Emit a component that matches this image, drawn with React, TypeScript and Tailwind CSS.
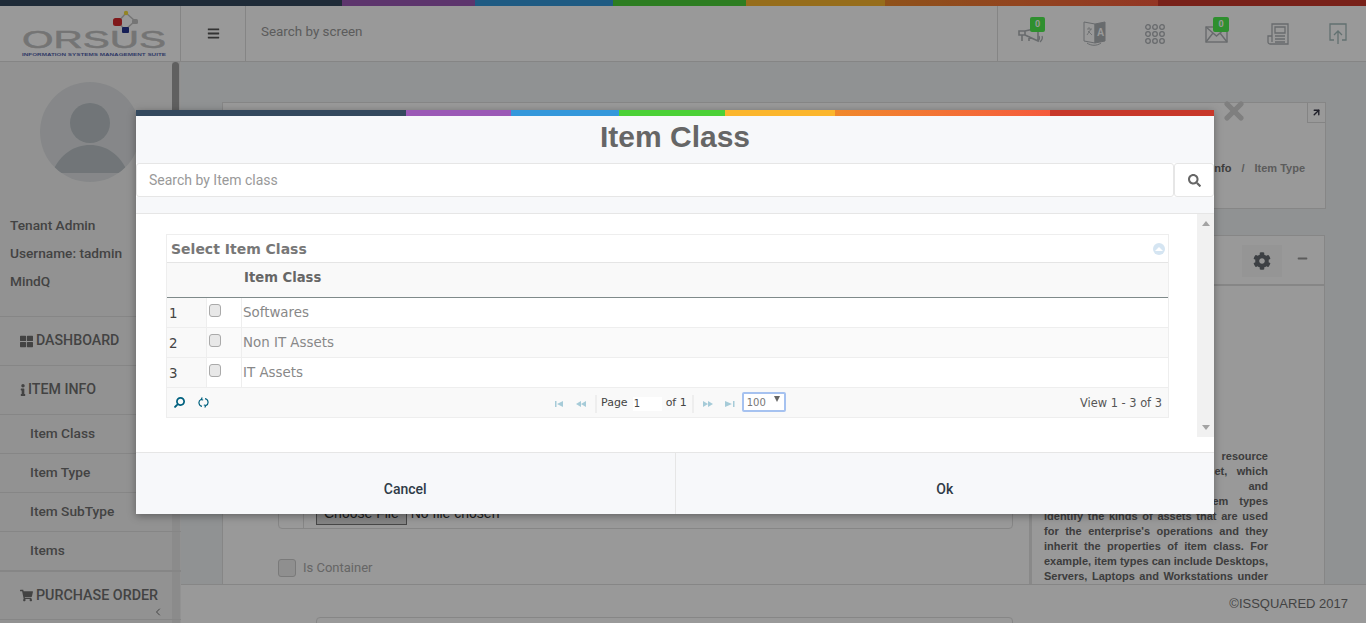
import React from "react";
import { X, ChevronLeft, ArrowUpRight } from "lucide-react";
import { FaThLarge, FaInfo, FaShoppingCart, FaBars, FaCog, FaMinus, FaSearch } from "react-icons/fa";

function Stripe({ h }: { h: string }) {
  return (
    <div className={`flex w-full shrink-0 ${h}`}>
      <div className="w-[25%] bg-[#34495e]" />
      <div className="w-[9.75%] bg-[#9b59b6]" />
      <div className="w-[10.1%] bg-[#3498db]" />
      <div className="w-[9.75%] bg-[#4cd137]" />
      <div className="w-[10.2%] bg-[#fbb62d]" />
      <div className="w-[20%] bg-gradient-to-r from-[#f0882b] to-[#f55a3c]" />
      <div className="flex-1 bg-[#c8382a]" />
    </div>
  );
}

function Logo() {
  return (
    <svg width="180" height="55" viewBox="0 0 180 55">
      <path d="M118 16 L126 7 L135 15 L125 24 L118 16" stroke="#c4c4c4" strokeWidth="1.5" fill="none" />
      <rect x="113" y="12" width="9" height="8" rx="2.5" fill="#d62a2e" />
      <circle cx="126" cy="7" r="2.2" fill="#f5de3c" />
      <rect x="132" y="13" width="6" height="5" rx="1.5" fill="#c4c4c4" />
      <text x="22" y="42" fontFamily="'Liberation Sans', sans-serif" fontSize="24" fontWeight="400" fill="#c2c2c2" stroke="#c2c2c2" strokeWidth="0.5" textLength="144" lengthAdjust="spacingAndGlyphs">ORSUS</text>
      <rect x="122" y="21" width="7" height="6" rx="1" fill="#26358f" />
      <text x="22" y="50" fontFamily="'Liberation Sans', sans-serif" fontSize="3.6" fontWeight="700" fill="#5666ae" textLength="144" lengthAdjust="spacingAndGlyphs">INFORMATION SYSTEMS MANAGEMENT SUITE</text>
    </svg>
  );
}

function Badge({ left }: { left: string }) {
  return <span className={`absolute top-[-5px] h-[15px] w-[15px] rounded-[2px] bg-[#4fee4f] text-center text-[9px] font-bold leading-[15px] text-white ${left}`}>0</span>;
}

function HeaderIcons() {
  const cls = "stroke-[#aeb2b6] fill-none";
  return (
    <div className="flex h-full w-[369px] items-center border-l border-[#dedede] pl-[20px]">
      <div className="relative mr-[37px] mt-[2px] h-[26px] w-[28px]">
        <Badge left="left-[12px]" />
        <svg width="28" height="26" viewBox="0 0 28 26" className={cls}><path d="M1 9h6v4H1zM7 9l13-3v13L7 13M4 13v6M11 14v5" strokeWidth="1.6" /><path d="M21 14c1 2 0 4-1 5M24 14c1 2 0 4-2 6" strokeWidth="1.3" /></svg>
      </div>
      <svg width="24" height="26" viewBox="0 0 24 26" className={`${cls} mr-[38px]`}><path d="M12 3 1 1v19l11 2zM4 22c4 3 10 3 14 0" strokeWidth="1" /><path d="M12 3l10-2v19l-10 2z" fill="#aeb2b6" /><text x="14" y="15" fontSize="10" fontWeight="700" fill="#fff" stroke="none" fontFamily="'Liberation Sans', sans-serif">A</text><path d="M4 8h5M6 6v2M8 8l-4 6M5 10l4 4" strokeWidth="0.8" /></svg>
      <svg width="20" height="20" viewBox="0 0 20 20" className={`${cls} mr-[40px]`} strokeWidth="1.3">
        {[3, 10, 17].flatMap((y) => [3, 10, 17].map((x) => <circle key={`${x}-${y}`} cx={x} cy={y} r="2.3" />))}
      </svg>
      <div className="relative mr-[38px] mt-[2px] h-[26px] w-[24px]">
        <Badge left="left-[8px] w-[16px]" />
        <svg width="24" height="26" viewBox="0 0 24 26" className={cls} strokeWidth="1.4"><rect x="1" y="5" width="21" height="15" /><path d="M1 5l10.5 9L22 5M1 20l7-9M22 20l-7-9" /></svg>
      </div>
      <svg width="22" height="22" viewBox="0 0 22 22" className={`${cls} mr-[40px]`} strokeWidth="1.3"><path d="M5 19V1h16v20H3a2 2 0 0 1-2-2v-6h4M8 4h10v6H8zM8 13h10M8 16h10M8 19h10" /></svg>
      <svg width="18" height="22" viewBox="0 0 18 22" className="fill-none stroke-[#a4bcbc]" strokeWidth="1.3"><path d="M5 17H1V1h16v16h-4M9 21V8M5 12l4-4 4 4" /></svg>
    </div>
  );
}

function Sidebar() {
  const top = "flex h-[49px] items-center border-t border-[#e0e0e0] pl-[20px] text-[14.2px]";
  return (
    <aside className="relative w-[181px] shrink-0 overflow-hidden bg-[#f4f4f4] font-['Roboto',sans-serif] text-[13.7px] font-medium text-[#707070]">
      <div className="absolute left-[172px] top-0 h-full w-[8px] bg-[#e8e8e8]" />
      <div className="absolute left-[172px] top-0 h-[60px] w-[7px] rounded bg-[#a0a0a0]" />
      <div className="ml-[40px] mt-[20px] flex h-[100px] w-[100px] justify-center overflow-hidden rounded-full bg-[#dfe2e4] pt-[20px]">
        <svg width="76" height="71" viewBox="0 0 76 71" className="fill-[#bcc3c8]"><circle cx="38" cy="21" r="20" /><path d="M0 71C8 52 22 43 38 43S68 52 76 71Z" /></svg>
      </div>
      <div className="mt-[34px] flex flex-col gap-[10px] pl-[10px] leading-[18px]">
        <div>Tenant Admin</div>
        <div>Username: tadmin</div>
        <div>MindQ</div>
      </div>
      <nav className="relative mt-[26px]">
        <div className={top}><FaThLarge size={13} className="mr-[3px]" />DASHBOARD</div>
        <div className={top}><FaInfo className="mr-[2px] h-[12px] w-[6px]" />ITEM INFO</div>
        {["Item Class", "Item Type", "Item SubType", "Items"].map((t) => (
          <div key={t} className="flex h-[39px] items-center border-t border-[#e0e0e0] pb-[2px] pl-[30px]">{t}</div>
        ))}
        <div className="flex h-[50px] items-center border-b border-t-2 border-[#e0e0e0] pl-[20px] text-[14.3px]"><FaShoppingCart size={13} className="mr-[3px]" />PURCHASE ORDER</div>
      </nav>
      <ChevronLeft size={12} className="absolute left-[152px] top-[544px]" />
    </aside>
  );
}

const panelLines = [
  "Item type is a category of resource",
  "in the form of item or asset, which",
  "can be categorized and",
  "and operational activities. Item types",
  "identify the kinds of assets that are used",
  "for the enterprise's operations and they",
  "inherit the properties of item class. For",
  "example, item types can include Desktops,",
  "Servers, Laptops and Workstations under",
];

function Background() {
  return (
    <div className="flex h-[623px] w-[1366px] flex-col bg-[#f0f3f6] font-['Roboto',sans-serif]">
      <Stripe h="h-[6px]" />
      <header className="flex h-[56px] shrink-0 items-stretch border-b border-[#dedede] bg-white">
        <div className="w-[181px] border-r border-[#dedede]"><Logo /></div>
        <div className="flex w-[65px] items-center justify-center border-r border-[#dedede] text-[#555]"><FaBars size={13} /></div>
        <div className="flex flex-1 items-center pb-[2px] pl-[15px] text-[13.4px] text-[#999]">Search by screen</div>
        <HeaderIcons />
      </header>
      <div className="flex min-h-0 flex-1">
        <Sidebar />
        <main className="flex min-w-0 flex-1 flex-col">
          <div className="min-h-0 flex-1 overflow-hidden pl-[41px] pt-[40px]">
            <div className="relative flex h-[107px] w-[1104px] items-center justify-end border border-[#e0e0e0] bg-white pr-[20px] pt-[26px] font-['Liberation_Sans',sans-serif] text-[11px] font-bold text-[#999]">
              <span className="text-[#666]">Item Info</span><span className="mx-[10px]">/</span><span>Item Type</span>
              <div className="absolute right-0 top-0 flex h-[20px] w-[18px] items-center justify-center border-b border-l border-[#ddd] text-[#334]"><ArrowUpRight size={11} strokeWidth={3} /></div>
            </div>
            <div className="mt-[26px] w-[1103px] border border-[#e0e0e0] bg-white">
              <div className="flex h-[50px] items-center justify-end border-b-2 border-[#e0e0e0] pr-[16px]">
                <div className="mr-[15px] mt-[2px] flex h-[32px] w-[40px] items-center justify-center bg-[#f8f8f8] text-[#666c72]"><FaCog size={18} /></div>
                <FaMinus size={11} className="mb-[3px] text-[#999]" />
              </div>
              <div className="flex h-[300px]">
                <div className="w-[806px] pl-[55px] pt-[209px]">
                  <div className="flex h-[34px] w-[735px] rounded-b border border-[#e0e0e0]">
                    <div className="w-[25px] border-r border-[#e0e0e0]" />
                    <div className="flex flex-1 items-center pl-[12px] pt-[3px] font-['Liberation_Sans',sans-serif] text-[14px] text-[#333]">
                      <span className="mr-[4px] border border-[#777] bg-[#ddd] px-[7px]">Choose File</span>No file chosen
                    </div>
                  </div>
                  <div className="mt-[29px] flex items-center text-[13px] text-[#aaa]">
                    <span className="mr-[7px] h-[18px] w-[18px] rounded-[3px] border border-[#ccc] bg-[#eee]" />Is Container
                  </div>
                </div>
                <div className="flex-1 border-l-[3px] border-[#e4e4e4] pl-[12px] pr-[56px] pt-[163px] font-['Liberation_Sans',sans-serif] text-[11px] font-bold leading-[15px] text-[#666]">
                  {panelLines.map((l) => (
                    <p key={l} className="text-justify [text-align-last:justify]">{l}</p>
                  ))}
                </div>
              </div>
            </div>
          </div>
          <footer className="relative flex h-[39px] shrink-0 items-center justify-end border-t border-[#e0e0e0] bg-white pr-[18px] font-['Liberation_Sans',sans-serif] text-[13px] text-[#707070]">
            ©ISSQUARED 2017
            <div className="absolute left-[135px] top-[32px] h-[12px] w-[697px] rounded border border-[#e0e0e0]" />
          </footer>
        </main>
      </div>
    </div>
  );
}

function Tri({ d, c = "#a6cbd8" }: { d: string; c?: string }) {
  return <svg width="10" height="8" viewBox="0 0 10 8" fill={c} className="shrink-0"><path d={d} /></svg>;
}

function Grid() {
  const rows = ["Softwares", "Non IT Assets", "IT Assets"];
  return (
    <div className="ml-[30px] mt-[20px] w-[1003px] border border-[#eee] font-['DejaVu_Sans',sans-serif]">
      <div className="flex h-[28px] items-center justify-between border-b border-[#e5e5e5] pl-[4px] pr-[3px] pt-[1px] text-[14px] font-bold text-[#777]">
        Select Item Class
        <span className="flex h-[12px] w-[12px] items-center justify-center rounded-full bg-[#d5e5f2]"><span className="h-0 w-0 border-x-[4px] border-b-[4px] border-x-transparent border-b-white" /></span>
      </div>
      <div className="flex h-[35px] border-b border-[#7f8a8a] bg-[#f9f9f9] pl-[77px] pt-[5px] text-[13.2px] font-bold text-[#666]">Item Class</div>
      {rows.map((r, i) => (
        <div key={r} className={`flex h-[30px] border-b border-[#eee] text-[13.4px] ${i === 1 ? "bg-[#fafafa]" : "bg-white"}`}>
          <div className="w-[40px] border-r border-[#eee] bg-[#f9f9f9] pl-[2px] pt-[6px] text-[#444]">{i + 1}</div>
          <div className="w-[35px] border-r border-[#eee] pl-[2px] pt-[6px]"><span className="block h-[13px] w-[12px] rounded-[3px] border border-[#aaa] bg-[#e8e8e8]" /></div>
          <div className="pl-[1px] pt-[5px] text-[#888]">{r}</div>
        </div>
      ))}
      <div className="relative flex h-[29px] items-center bg-[#f9f9f9] pl-[388px] pt-[2px] text-[11px] text-[#444]">
        <div className="absolute left-[7px] top-[9px] flex items-center gap-[13px] text-[#00617f]">
          <FaSearch size={11} className="-scale-x-100" />
          <svg width="11" height="11" viewBox="0 0 11 11" fill="none" stroke="currentColor" strokeWidth="1.2"><path d="M3 2.5a3.6 3.6 0 0 0 1 6.8M8 8.5a3.6 3.6 0 0 0-1-6.8M5.2 3 3.2 2.5l1-2M5.8 8l2 .5-1 2" /></svg>
        </div>
        <Tri d="M0 1h1.5v6H0zM2 4l6-3v6z" />
        <span className="w-[11px] shrink-0" />
        <Tri d="M0 4l5-3v6zM5 4l5-3v6z" />
        <span className="ml-[9px] mr-[4px] h-[18px] w-[2px] bg-[#eee]" />
        Page
        <span className="ml-[5px] mr-[4px] block h-[14px] w-[29px] bg-white pl-[1px] text-[10px] leading-[14px]">1</span>
        of 1
        <span className="ml-[5px] mr-[9px] h-[18px] w-[2px] bg-[#eee]" />
        <Tri d="M0 1l5 3-5 3zM5 1l5 3-5 3z" />
        <span className="w-[12px] shrink-0" />
        <Tri d="M0 1l7 3-7 3zM8 1h1.5v6H8z" />
        <span className="relative -mt-[4px] ml-[7px] flex h-[20px] w-[44px] items-end rounded-[2px] border-2 border-[#a6c2f0] bg-white pb-[1px] pl-[3px] text-[10px] leading-[12px] text-[#777]">
          100<span className="absolute right-[4px] top-[2px] h-0 w-0 border-x-[3.5px] border-t-[6px] border-x-transparent border-t-[#666]" />
        </span>
        <div className="absolute right-[6px] text-[11.4px] text-[#555]">View 1 - 3 of 3</div>
      </div>
    </div>
  );
}

function Modal() {
  return (
    <div className="absolute left-[136px] top-[110px] flex h-[404px] w-[1078px] flex-col bg-[#f7f8fa] font-['Liberation_Sans',sans-serif] shadow-[0_2px_8px_rgba(0,0,0,0.35)]">
      <Stripe h="h-[6px]" />
      <h1 className="h-[47px] text-center text-[30px] font-bold leading-[42px] text-[#666]">Item Class</h1>
      <div className="flex h-[34px] bg-white">
        <div className="flex flex-1 items-center rounded-[3px] border border-[#e6e6e6] pl-[12px] font-['Roboto',sans-serif] text-[14px] text-[#999]">Search by Item class</div>
        <div className="flex w-[40px] items-center justify-center rounded-[3px] border border-[#e6e6e6] text-[#666]"><FaSearch size={13} /></div>
      </div>
      <div className="h-[16px] shrink-0" />
      <div className="relative h-[239px] shrink-0 border-t border-[#e6e6e6] bg-white">
        <Grid />
        <div className="absolute bottom-[15px] right-0 top-0 flex w-[17px] flex-col items-center justify-between bg-[#f1f1f1] py-[7px]">
          <span className="h-0 w-0 border-x-[4px] border-b-[5px] border-x-transparent border-b-[#a3a3a3]" />
          <span className="h-0 w-0 border-x-[4px] border-t-[5px] border-x-transparent border-t-[#a3a3a3]" />
        </div>
      </div>
      <div className="flex flex-1 border-t border-[#e6e6e6] font-['Roboto',sans-serif] text-[14px] font-medium text-[#2f3b47]">
        <div className="flex flex-1 items-center justify-center border-r border-[#e6e6e6] pt-[12px]">Cancel</div>
        <div className="flex flex-1 items-center justify-center pt-[12px]">Ok</div>
      </div>
    </div>
  );
}

export default function App() {
  return (
    <div className="relative h-[623px] w-[1366px] overflow-hidden">
      <Background />
      <div className="absolute inset-0 bg-black/40" />
      <X size={28} strokeWidth={4.5} className="absolute left-[1220px] top-[97px] text-[#7f7f7f]" />
      <Modal />
    </div>
  );
}
